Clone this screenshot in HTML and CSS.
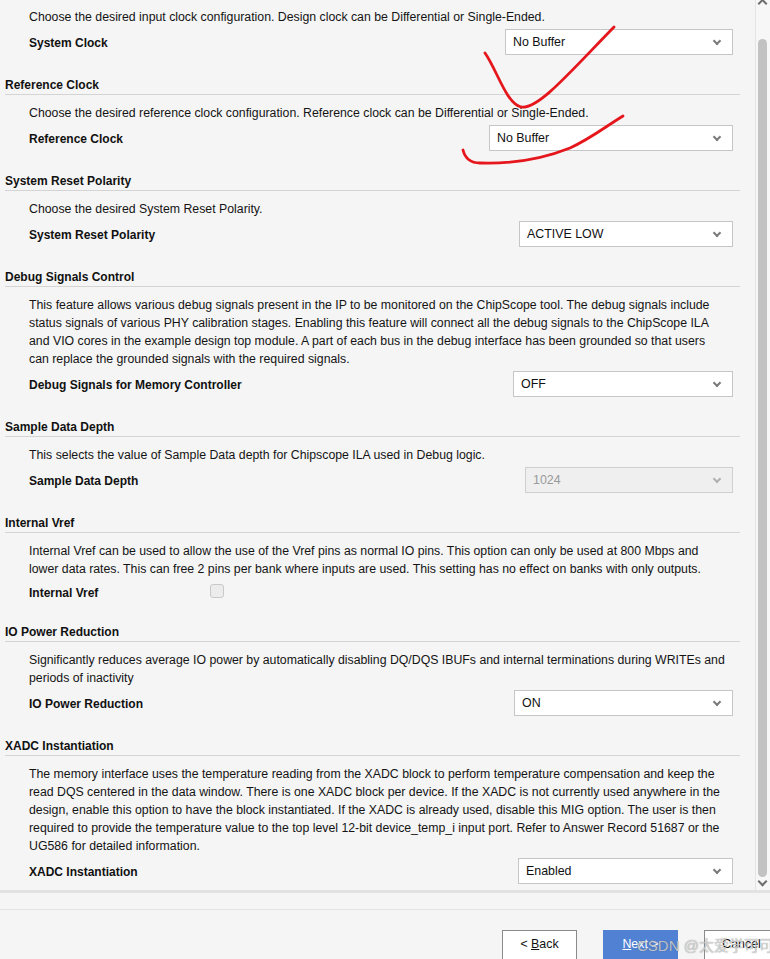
FILE: index.html
```html
<!DOCTYPE html>
<html lang="en">
<head>
  <meta charset="UTF-8" />
  <meta name="viewport" content="width=device-width, initial-scale=1.0" />
  <title>Memory Interface Generator - Options</title>
  <link rel="stylesheet" href="styles.css">
</head>
<body>
  <div class="dialog">
    <div class="panel">
      <div class="content">

        <div class="section first">
          <p class="desc">Choose the desired input clock configuration. Design clock can be Differential or Single-Ended.</p>
          <div class="row">
            <span class="label">System Clock</span>
            <div class="combo w228">No Buffer<span class="chev"></span></div>
          </div>
        </div>

        <div class="section">
          <h3 class="head">Reference Clock</h3>
          <p class="desc">Choose the desired reference clock configuration. Reference clock can be Differential or Single-Ended.</p>
          <div class="row">
            <span class="label">Reference Clock</span>
            <div class="combo w244">No Buffer<span class="chev"></span></div>
          </div>
        </div>

        <div class="section">
          <h3 class="head">System Reset Polarity</h3>
          <p class="desc">Choose the desired System Reset Polarity.</p>
          <div class="row">
            <span class="label">System Reset Polarity</span>
            <div class="combo w214">ACTIVE LOW<span class="chev"></span></div>
          </div>
        </div>

        <div class="section">
          <h3 class="head">Debug Signals Control</h3>
          <p class="desc">This feature allows various debug signals present in the IP to be monitored on the ChipScope tool. The debug signals include<br>status signals of various PHY calibration stages. Enabling this feature will connect all the debug signals to the ChipScope ILA<br>and VIO cores in the example design top module. A part of each bus in the debug interface has been grounded so that users<br>can replace the grounded signals with the required signals.</p>
          <div class="row">
            <span class="label">Debug Signals for Memory Controller</span>
            <div class="combo w220">OFF<span class="chev"></span></div>
          </div>
        </div>

        <div class="section">
          <h3 class="head">Sample Data Depth</h3>
          <p class="desc">This selects the value of Sample Data depth for Chipscope ILA used in Debug logic.</p>
          <div class="row">
            <span class="label">Sample Data Depth</span>
            <div class="combo w208 disabled">1024<span class="chev"></span></div>
          </div>
        </div>

        <div class="section">
          <h3 class="head">Internal Vref</h3>
          <p class="desc">Internal Vref can be used to allow the use of the Vref pins as normal IO pins. This option can only be used at 800 Mbps and<br>lower data rates. This can free 2 pins per bank where inputs are used. This setting has no effect on banks with only outputs.</p>
          <div class="row short">
            <span class="label vref">Internal Vref</span>
            <span class="check"></span>
          </div>
        </div>

        <div class="section">
          <h3 class="head">IO Power Reduction</h3>
          <p class="desc">Significantly reduces average IO power by automatically disabling DQ/DQS IBUFs and internal terminations during WRITEs and<br>periods of inactivity</p>
          <div class="row">
            <span class="label">IO Power Reduction</span>
            <div class="combo w219">ON<span class="chev"></span></div>
          </div>
        </div>

        <div class="section">
          <h3 class="head">XADC Instantiation</h3>
          <p class="desc">The memory interface uses the temperature reading from the XADC block to perform temperature compensation and keep the<br>read DQS centered in the data window. There is one XADC block per device. If the XADC is not currently used anywhere in the<br>design, enable this option to have the block instantiated. If the XADC is already used, disable this MIG option. The user is then<br>required to provide the temperature value to the top level 12-bit device_temp_i input port. Refer to Answer Record 51687 or the<br>UG586 for detailed information.</p>
          <div class="row">
            <span class="label">XADC Instantiation</span>
            <div class="combo w215">Enabled<span class="chev"></span></div>
          </div>
        </div>

      </div>
      <div class="scrollbar">
        <span class="arrow up"></span>
        <div class="thumb"></div>
        <span class="arrow down"></span>
      </div>
    </div>

    <div class="footer">
      <button class="btn">&lt; <u>B</u>ack</button>
      <button class="btn primary"><u>N</u>ext &gt;</button>
      <button class="btn">Cancel</button>
    </div>

    <div class="watermark">CSDN @太爱学可可</div>

    <svg class="scribble" width="770" height="959" viewBox="0 0 770 959">
      <path d="M485,53 C497,70 506,103 521,107 C538,110 570,72 614,27" />
      <path d="M463,150 C465,158 470,163 480,163 C510,164 540,160 570,148 C590,139 605,127 623,116" />
    </svg>
  </div>
</body>
</html>
```

FILE: styles.css
```css
* { box-sizing: border-box; }

html, body {
  margin: 0;
  padding: 0;
}

body {
  font-family: "Liberation Sans", Arial, sans-serif;
  font-size: 12px;
  color: #141414;
  background: #f5f5f5;
}

.dialog {
  position: relative;
  width: 770px;
  height: 959px;
  overflow: hidden;
}

.panel {
  display: flex;
  height: 890px;
  border-bottom: 3px solid #e2e2e2;
  box-sizing: content-box;
}

.content {
  width: 755px;
  padding: 0 15px 0 5px;
}

.section {
  padding-top: 21px;
}
.section.first {
  padding-top: 0;
}
.section.first .desc {
  margin-top: 8px;
}

.head {
  margin: 0;
  height: 19px;
  padding-top: 1px;
  line-height: 16px;
  font-size: 12px;
  font-weight: bold;
  color: #111;
  border-bottom: 1px solid #d4d4d4;
}

.desc {
  margin: 9px 0 0 24px;
  line-height: 18px;
  font-size: 12.3px;
  white-space: nowrap;
}

.row {
  display: flex;
  align-items: center;
  margin: 3px 7px 0 24px;
  height: 26px;
}
.row.short {
  height: 21px;
}

.label {
  padding-top: 2px;
  font-weight: bold;
  color: #111;
}
.label.vref {
  width: 181px;
}

.combo {
  position: relative;
  margin-left: auto;
  height: 26px;
  line-height: 24px;
  padding-left: 7px;
  font-size: 12.4px;
  background: #fff;
  border: 1px solid #c6c6c6;
  color: #111;
}
.combo.disabled {
  background: #efefef;
  color: #9a9a9a;
  border-color: #cfcfcf;
}

.w208 { width: 208px; }
.w214 { width: 214px; }
.w215 { width: 215px; }
.w219 { width: 219px; }
.w220 { width: 220px; }
.w228 { width: 228px; }
.w244 { width: 244px; }

.chev {
  position: absolute;
  right: 12px;
  top: 8px;
  width: 6px;
  height: 6px;
  border-right: 2px solid #7a7a7a;
  border-bottom: 2px solid #7a7a7a;
  transform: rotate(45deg);
}
.combo.disabled .chev {
  border-color: #b0b0b0;
}

.check {
  width: 14px;
  height: 14px;
  border: 1px solid #c9c9c9;
  border-radius: 3px;
  background: #ececec;
  margin-top: -1px;
}

.scrollbar {
  position: relative;
  width: 15px;
  border-left: 1px solid #e4e4e4;
  background: #f7f7f7;
}
.thumb {
  position: absolute;
  left: 2px;
  top: 39px;
  width: 9px;
  height: 838px;
  border-radius: 5px;
  background: #c2c2c2;
}
.arrow {
  position: absolute;
  left: 3px;
  width: 7px;
  height: 7px;
  border-right: 2px solid #6e6e6e;
  border-bottom: 2px solid #6e6e6e;
}
.arrow.up {
  top: 0;
  transform: rotate(-135deg);
}
.arrow.down {
  top: 878px;
  transform: rotate(45deg);
}

.footer {
  display: flex;
  gap: 26px;
  margin-top: 16px;
  border-top: 1px solid #e3e3e3;
  padding: 20px 0 0 502px;
}

.btn {
  flex: none;
  width: 75px;
  height: 32px;
  padding: 0 0 4px;
  font-family: inherit;
  font-size: 12.4px;
  color: #111;
  background: #fff;
  border: 1px solid #8a8a8a;
}
.btn.primary {
  background: #5181d2;
  border-color: #5181d2;
  color: #fff;
}

.watermark {
  position: absolute;
  left: 637px;
  top: 934px;
  font-family: "Liberation Sans", "Noto Sans CJK SC", sans-serif;
  font-size: 15px;
  color: rgba(235, 235, 235, 0.7);
  text-shadow: 0 0 1px rgba(80, 80, 80, 0.7);
  white-space: nowrap;
}

.scribble {
  position: absolute;
  left: 0;
  top: 0;
  pointer-events: none;
}
.scribble path {
  fill: none;
  stroke: #e5161c;
  stroke-width: 2.8;
  stroke-linecap: round;
}
```
